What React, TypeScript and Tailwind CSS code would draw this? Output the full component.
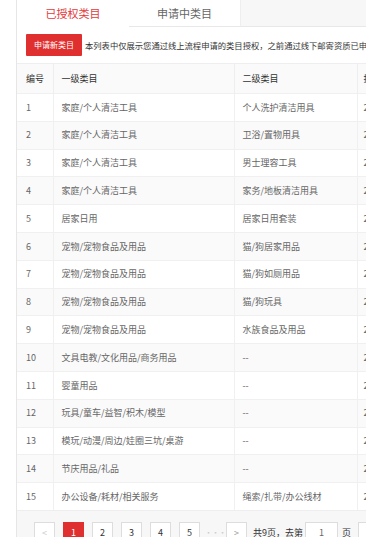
import { useState } from 'react';

type Row = { id: number; first: string; second: string; date: string };

const rows: Row[] = [
  { id: 1, first: '家庭/个人清洁工具', second: '个人洗护清洁用具', date: '2019-05-20' },
  { id: 2, first: '家庭/个人清洁工具', second: '卫浴/置物用具', date: '2019-05-20' },
  { id: 3, first: '家庭/个人清洁工具', second: '男士理容工具', date: '2019-05-20' },
  { id: 4, first: '家庭/个人清洁工具', second: '家务/地板清洁用具', date: '2019-05-20' },
  { id: 5, first: '居家日用', second: '居家日用套装', date: '2019-05-20' },
  { id: 6, first: '宠物/宠物食品及用品', second: '猫/狗居家用品', date: '2019-05-20' },
  { id: 7, first: '宠物/宠物食品及用品', second: '猫/狗如厕用品', date: '2019-05-20' },
  { id: 8, first: '宠物/宠物食品及用品', second: '猫/狗玩具', date: '2019-05-20' },
  { id: 9, first: '宠物/宠物食品及用品', second: '水族食品及用品', date: '2019-05-20' },
  { id: 10, first: '文具电教/文化用品/商务用品', second: '--', date: '2019-05-20' },
  { id: 11, first: '婴童用品', second: '--', date: '2019-05-20' },
  { id: 12, first: '玩具/童车/益智/积木/模型', second: '--', date: '2019-05-20' },
  { id: 13, first: '模玩/动漫/周边/娃圈三坑/桌游', second: '--', date: '2019-05-20' },
  { id: 14, first: '节庆用品/礼品', second: '--', date: '2019-05-20' },
  { id: 15, first: '办公设备/耗材/相关服务', second: '绳索/扎带/办公线材', date: '2019-05-20' },
];

type TabKey = 'granted' | 'pending';

export default function App() {
  const [tab, setTab] = useState<TabKey>('granted');
  const [page, setPage] = useState(1);

  const pageBtn = 'h-[21px] min-w-[21px] px-[6px] flex items-center justify-center border text-[9px]';

  return (
    <div
      className="w-[366px] h-[550px] overflow-hidden bg-white text-[#666]"
      style={{ fontFamily: '"Microsoft YaHei", "Noto Sans CJK SC", "Noto Sans", sans-serif' }}
    >
      <div className="ml-[16px] w-[560px] h-[537px] overflow-hidden border-l border-[#e6e6e6] flex flex-col">
        {/* Tabs */}
        <div className="h-[27px] flex bg-[#f7f7f7] shrink-0">
          <button
            type="button"
            onClick={() => setTab('granted')}
            className={`w-[112px] text-[11px] ${tab === 'granted' ? 'bg-white text-[#e4393c]' : 'bg-white text-[#666] border-b border-[#e8e8e8]'}`}
          >
            已授权类目
          </button>
          <button
            type="button"
            onClick={() => setTab('pending')}
            className={`w-[112px] text-[11px] border-r border-[#eee] ${tab === 'pending' ? 'bg-white text-[#e4393c]' : 'bg-white text-[#666] border-b border-b-[#e8e8e8]'}`}
          >
            申请中类目
          </button>
          <div className="flex-1 border-b border-[#e8e8e8]" />
        </div>

        {/* Notice */}
        <div className="h-[36px] flex items-center pl-[9px] gap-[3px] shrink-0 whitespace-nowrap">
          <button type="button" className="h-[22px] px-[8px] bg-[#e02f2f] text-white text-[8px] rounded-[1px]">
            申请新类目
          </button>
          <span className="text-[8.3px] text-[#333]">
            本列表中仅展示您通过线上流程申请的类目授权，之前通过线下邮寄资质已申请的类目请联系客服查询
          </span>
        </div>

        {/* Table */}
        <table className="border-collapse text-[9px] w-[560px] table-fixed shrink-0">
          <colgroup>
            <col className="w-[36px]" />
            <col className="w-[181px]" />
            <col className="w-[123px]" />
            <col />
          </colgroup>
          <thead>
            <tr className="h-[30px] bg-[#fafafa] border-t border-[#eee] text-[#333]">
              <th className="font-normal text-left pl-[9px] border-r border-[#eee]">编号</th>
              <th className="font-normal text-left pl-[8px] border-r border-[#eee]">一级类目</th>
              <th className="font-normal text-left pl-[8px] border-r border-[#eee]">二级类目</th>
              <th className="font-normal text-left pl-[6px]">授权时间</th>
            </tr>
          </thead>
          <tbody>
            {rows.map(r => (
              <tr key={r.id} className={`h-[27.8px] border-t border-[#f0f0f0] ${r.id % 2 === 0 ? 'bg-[#fafafa]' : 'bg-white'}`}>
                <td className="pl-[9px] border-r border-[#f0f0f0]">{r.id}</td>
                <td className="pl-[8px] border-r border-[#f0f0f0]">{r.first}</td>
                <td className="pl-[8px] border-r border-[#f0f0f0]">{r.second}</td>
                <td className="pl-[6px]">{r.date}</td>
              </tr>
            ))}
          </tbody>
        </table>

        {/* Pagination */}
        <div className="flex-1 bg-[#f7f7f7] border-t border-[#eee] pt-[11px] pl-[17px] flex items-start gap-[8px] whitespace-nowrap">
          <span className={`${pageBtn} bg-white border-[#ddd] text-[#ccc]`}>&lt;</span>
          {[1, 2, 3, 4, 5].map(n => (
            <button
              key={n}
              type="button"
              onClick={() => setPage(n)}
              className={`${pageBtn} ${page === n ? 'bg-[#e02f2f] border-[#e02f2f] text-white' : 'bg-white border-[#ddd] text-[#333]'}`}
            >
              {n}
            </button>
          ))}
          <span className="w-[16px] h-[21px] flex items-center justify-center text-[#ccc] text-[8px] -ml-[1px] -mr-[5px] tracking-[-1px]">···</span>
          <span className={`${pageBtn} bg-white border-[#ddd] text-[#999]`}>&gt;</span>
          <div className="h-[21px] flex items-center text-[9px] text-[#333] -ml-[2px] gap-[2px]">
            <span>共9页，去第</span>
            <span className="w-[33px] h-[21px] border border-[#ddd] bg-white flex items-center justify-center text-[#666]">1</span>
            <span className="ml-[2px]">页</span>
            <span className="ml-[5px] h-[21px] px-[8px] border border-[#ddd] bg-white flex items-center">确定</span>
          </div>
        </div>
      </div>
    </div>
  );
}
